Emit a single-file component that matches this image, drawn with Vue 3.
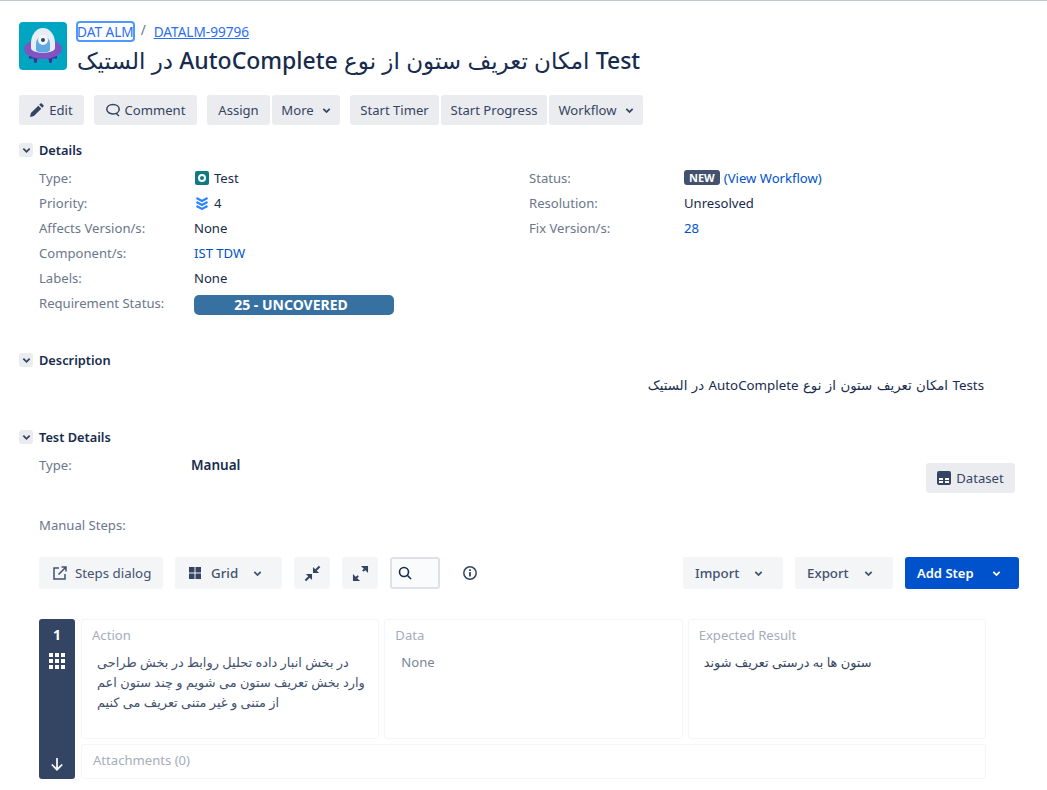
<script setup>
const leftFields = [
  { label: 'Affects Version/s:', value: 'None' },
  { label: 'Component/s:', value: 'IST TDW', link: true },
  { label: 'Labels:', value: 'None' },
]
const actionLines = [
  'در بخش انبار داده تحلیل روابط در بخش طراحی',
  'وارد بخش تعریف ستون می شویم و چند ستون اعم',
  'از متنی و غیر متنی تعریف می کنیم',
]
</script>

<template>
  <div class="page">
    <header class="issue-head">
      <svg class="avatar" viewBox="0 0 48 48">
        <rect width="48" height="48" rx="4" fill="#00a5c2" />
        <path d="M10 34h28v2.500h-4.500l-1 4.500h-2l-1-4.500H18.500l-1 4.500h-2l-1-4.500H10z" fill="#403294" />
        <ellipse cx="24" cy="27" rx="19" ry="10" fill="#8154c4" />
        <path d="M12 21a12 15 0 0 1 24 0v5a12 5 0 0 1-24 0z" fill="#e6edf5" />
        <path d="M17 22a7 8 0 0 1 14 0v6a7 2.500 0 0 1-14 0z" fill="#5fa8e0" />
        <circle cx="24" cy="18" r="5" fill="#f4f5f7" />
        <circle cx="24" cy="18" r="2" fill="#344563" />
      </svg>
      <div class="head-text">
        <div class="crumbs">
          <a class="crumb focused">DAT ALM</a>
          <span class="sep">/</span>
          <a class="crumb">DATALM-99796</a>
        </div>
        <h1 dir="rtl">Test امکان تعریف ستون از نوع AutoComplete در الستیک</h1>
      </div>
    </header>

    <div class="ops">
      <div class="group">
        <button class="btn b-edit">
          <svg class="ico" viewBox="0 0 14 14"><path d="M0 14l.9-3.900 7.400-7.400 3 3-7.400 7.400zM9.200 1.800l1.200-1.200a1 1 0 0 1 1.400 0l1.600 1.600a1 1 0 0 1 0 1.400l-1.200 1.200z" fill="#344563" /></svg>
          Edit
        </button>
      </div>
      <div class="group">
        <button class="btn b-comment">
          <svg class="ico" viewBox="0 0 14 14"><path d="M7 1.500c3.500 0 6.200 2 6.200 4.800S10.500 11 7 11C3.500 11 .8 9.100.8 6.300S3.500 1.500 7 1.500zM10 10.200l3 2.800" fill="none" stroke="#344563" stroke-width="1.500" /></svg>
          Comment
        </button>
      </div>
      <div class="group">
        <button class="btn b-assign">Assign</button>
        <button class="btn b-more">More
          <svg class="chev" viewBox="0 0 10 10"><path d="M1.500 3.200L5 6.700l3.500-3.500" fill="none" stroke="#344563" stroke-width="2" /></svg>
        </button>
      </div>
      <div class="group">
        <button class="btn b-timer">Start Timer</button>
        <button class="btn b-progress">Start Progress</button>
        <button class="btn b-workflow">Workflow
          <svg class="chev" viewBox="0 0 10 10"><path d="M1.500 3.200L5 6.700l3.500-3.500" fill="none" stroke="#344563" stroke-width="2" /></svg>
        </button>
      </div>
    </div>

    <section class="details">
      <div class="mod-head">
        <span class="toggle"><svg viewBox="0 0 10 10"><path d="M1.500 3L5 6.500 8.500 3" fill="none" stroke="#344563" stroke-width="2" /></svg></span>
        <h2>Details</h2>
      </div>
      <div class="detail-cols">
        <div class="col">
          <div class="row">
            <span class="lbl">Type:</span>
            <span class="val">
              <svg class="type-ico" viewBox="0 0 14 14"><rect width="14" height="14" rx="2" fill="#0e7a86" /><circle cx="7" cy="7" r="3" fill="none" stroke="#fff" stroke-width="2" /></svg>
              Test
            </span>
          </div>
          <div class="row">
            <span class="lbl">Priority:</span>
            <span class="val">
              <svg class="type-ico" viewBox="0 0 14 14"><path d="M1.500 2l5.500 3 5.500-3M1.500 6l5.500 3 5.500-3M1.500 10l5.500 3 5.500-3" fill="none" stroke="#2684ff" stroke-width="2" /></svg>
              4
            </span>
          </div>
          <div v-for="f in leftFields" :key="f.label" class="row">
            <span class="lbl">{{ f.label }}</span>
            <span class="val" :class="{ link: f.link }">{{ f.value }}</span>
          </div>
          <div class="row">
            <span class="lbl">Requirement Status:</span>
            <span class="req-pill">25 - UNCOVERED</span>
          </div>
        </div>
        <div class="col">
          <div class="row">
            <span class="lbl">Status:</span>
            <span class="val"><span class="lozenge">NEW</span><span class="link">(View Workflow)</span></span>
          </div>
          <div class="row">
            <span class="lbl">Resolution:</span>
            <span class="val">Unresolved</span>
          </div>
          <div class="row">
            <span class="lbl">Fix Version/s:</span>
            <span class="val link">28</span>
          </div>
        </div>
      </div>
    </section>

    <section class="description">
      <div class="mod-head">
        <span class="toggle"><svg viewBox="0 0 10 10"><path d="M1.500 3L5 6.500 8.500 3" fill="none" stroke="#344563" stroke-width="2" /></svg></span>
        <h2>Description</h2>
      </div>
      <p class="desc-text" dir="rtl">Tests امکان تعریف ستون از نوع AutoComplete در الستیک</p>
    </section>

    <section class="test-details">
      <div class="mod-head">
        <span class="toggle"><svg viewBox="0 0 10 10"><path d="M1.500 3L5 6.500 8.500 3" fill="none" stroke="#344563" stroke-width="2" /></svg></span>
        <h2>Test Details</h2>
      </div>
      <div class="type-row">
        <span class="lbl">Type:</span>
        <b class="manual">Manual</b>
        <button class="btn dataset">
          <svg class="ico" viewBox="0 0 14 14"><rect width="14" height="14" rx="2" fill="#344563" /><path d="M2 7h4v2H2zM8 7h4v2H8zM2 10h4v2H2zM8 10h4v2H8z" fill="#fff" /></svg>
          Dataset
        </button>
      </div>
      <div class="lbl steps-lbl">Manual Steps:</div>

      <div class="steps-bar">
        <button class="tbtn wide">
          <svg class="ico" viewBox="0 0 14 14"><path d="M6 2H1v11h11V8" fill="none" stroke="#42526e" stroke-width="1.500" /><path d="M5.500 8.500L12.500 1.500M8.500 1h4.500v4.500" fill="none" stroke="#42526e" stroke-width="1.500" /></svg>
          Steps dialog
        </button>
        <button class="tbtn grid">
          <svg class="ico small" viewBox="0 0 12 12"><path d="M0 0h5.500v5.500H0zM6.500 0H12v5.500H6.500zM0 6.500h5.500V12H0zM6.500 6.500H12V12H6.500z" fill="#344563" /></svg>
          Grid
          <svg class="chev right" viewBox="0 0 10 10"><path d="M1.500 3.200L5 6.700l3.500-3.500" fill="none" stroke="#42526e" stroke-width="2" /></svg>
        </button>
        <button class="tbtn square">
          <svg class="ico big" viewBox="0 0 18 18"><path d="M1.500 16.500L6.500 11.500M11.500 6.500L16.500 1.500" fill="none" stroke="#344563" stroke-width="2.200" /><path d="M2 9.500h6.500V16zM16 8.500H9.500V2z" fill="#344563" /></svg>
        </button>
        <button class="tbtn square">
          <svg class="ico big" viewBox="0 0 18 18"><path d="M6.500 11.500L2.500 15.500M11.500 6.500L15.500 2.500" fill="none" stroke="#344563" stroke-width="2.200" /><path d="M1 9.500V17h7.500zM17 8.500V1H9.500z" fill="#344563" /></svg>
        </button>
        <div class="search">
          <svg class="ico" viewBox="0 0 14 14"><circle cx="6" cy="6" r="4.500" fill="none" stroke="#172b4d" stroke-width="1.600" /><path d="M9.300 9.300l3.700 3.700" stroke="#172b4d" stroke-width="1.600" /></svg>
        </div>
        <svg class="info" viewBox="0 0 16 16"><circle cx="8" cy="8" r="6.200" fill="none" stroke="#344563" stroke-width="1.500" /><path d="M7.100 7h1.800v4.500H7.100zM7.100 4.200h1.800v1.800H7.100z" fill="#344563" /></svg>
        <div class="bar-right">
          <button class="tbtn imp">Import
            <svg class="chev right" viewBox="0 0 10 10"><path d="M1.500 3.200L5 6.700l3.500-3.500" fill="none" stroke="#42526e" stroke-width="2" /></svg>
          </button>
          <button class="tbtn exp">Export
            <svg class="chev right" viewBox="0 0 10 10"><path d="M1.500 3.200L5 6.700l3.500-3.500" fill="none" stroke="#42526e" stroke-width="2" /></svg>
          </button>
          <button class="tbtn add">Add Step
            <svg class="chev right" viewBox="0 0 10 10"><path d="M1.500 3.200L5 6.700l3.500-3.500" fill="none" stroke="#fff" stroke-width="2" /></svg>
          </button>
        </div>
      </div>

      <div class="step">
        <div class="step-side">
          <span class="num">1</span>
          <svg class="dots" viewBox="0 0 16 16"><path d="M0 0h4v4H0zM6 0h4v4H6zM12 0h4v4h-4zM0 6h4v4H0zM6 6h4v4H6zM12 6h4v4h-4zM0 12h4v4H0zM6 12h4v4H6zM12 12h4v4h-4z" fill="#fff" /></svg>
          <svg class="arrow" viewBox="0 0 14 14"><path d="M7 1v11.500M1.800 7.500L7 12.700l5.200-5.200" fill="none" stroke="#fff" stroke-width="1.700" /></svg>
        </div>
        <div class="step-body">
          <div class="cells">
            <div class="cell action">
              <div class="cell-title">Action</div>
              <div class="cell-text fa">
                <div v-for="line in actionLines" :key="line" dir="rtl" class="fa-line">{{ line }}</div>
              </div>
            </div>
            <div class="cell data">
              <div class="cell-title">Data</div>
              <div class="cell-text none">None</div>
            </div>
            <div class="cell expected">
              <div class="cell-title">Expected Result</div>
              <div class="cell-text fa"><div dir="rtl" class="fa-line dark">ستون ها به درستی تعریف شوند</div></div>
            </div>
          </div>
          <div class="attachments">Attachments (0)</div>
        </div>
      </div>
    </section>
  </div>
</template>

<style>
html, body {
  margin: 0;
  background: #fff;
}
</style>

<style scoped>
.page {
  height: 790px;
  box-sizing: border-box;
  overflow: hidden;
  border-top: 1px solid #c1c7d0;
  font-family: "Noto Sans", "DejaVu Sans", sans-serif;
  font-size: 13.1px;
  color: #172b4d;
}
button {
  font-family: inherit;
  border: none;
  padding: 0;
  cursor: pointer;
}
.issue-head {
  display: flex;
  gap: 10px;
  padding: 21px 0 0 19px;
}
.avatar {
  width: 48px;
  height: 48px;
  flex: none;
}
.head-text {
  margin-top: -1px;
}
.crumbs {
  display: flex;
  align-items: center;
  font-size: 13.6px;
  height: 20px;
  gap: 5px;
}
.crumb {
  color: #2a6ef5;
  text-decoration: underline;
}
.crumb.focused {
  text-decoration: none;
  outline: 2px solid #4c9aff;
  outline-offset: -1px;
  border-radius: 3px;
}
.sep {
  color: #6b778c;
  margin: -3px 3px 0 2px;
}
h1 {
  display: inline-block;
  margin: 3px 0 0;
  font-size: 23px;
  word-spacing: 0.3px;
  line-height: 32px;
  font-weight: 500;
  color: #172b4d;
}
.ops {
  display: flex;
  gap: 10px;
  padding: 19px 0 0 19px;
}
.group {
  display: flex;
  gap: 2px;
}
.btn {
  display: flex;
  align-items: center;
  justify-content: center;
  gap: 5px;
  height: 30px;
  background: #ebecf0;
  color: #344563;
  font-size: 13.1px;
  border-radius: 3px;
}
.b-edit { width: 65px; }
.b-comment { width: 103px; }
.b-assign { width: 63px; }
.b-more { width: 68px; }
.b-timer { width: 89px; }
.b-progress { width: 106px; }
.b-workflow { width: 94px; }
.ico {
  width: 14px;
  height: 14px;
  flex: none;
}
.ico.small {
  width: 12px;
  height: 12px;
}
.ico.big {
  width: 17px;
  height: 17px;
}
.chev {
  width: 9px;
  height: 9px;
  margin-left: 3px;
}
.details {
  padding-top: 18px;
}
.mod-head {
  display: flex;
  align-items: center;
  gap: 6px;
  padding-left: 19px;
  height: 14px;
}
.toggle {
  display: flex;
  align-items: center;
  justify-content: center;
  width: 14px;
  height: 14px;
  background: #ebecf0;
  border-radius: 3px;
}
.toggle svg {
  width: 9px;
  height: 9px;
}
h2 {
  margin: 0;
  font-size: 12.8px;
  font-weight: 600;
  color: #172b4d;
}
.detail-cols {
  display: grid;
  grid-template-columns: 490px 1fr;
  padding: 8px 0 0 39px;
}
.row {
  display: grid;
  grid-template-columns: 155px 1fr;
  height: 25px;
  align-items: center;
}
.lbl {
  color: #6b778c;
}
.val {
  display: flex;
  align-items: center;
  gap: 5px;
  color: #172b4d;
}
.link {
  color: #0052cc;
}
.type-ico {
  width: 14px;
  height: 14px;
  margin-left: 1px;
}
.lozenge {
  background: #42526e;
  color: #fff;
  font-size: 11px;
  font-weight: 700;
  line-height: 15px;
  padding: 0 5px;
  border-radius: 3px;
  margin-right: -1px;
}
.req-pill {
  width: 200px;
  height: 20px;
  line-height: 20px;
  margin-top: 4px;
  padding-right: 6px;
  box-sizing: border-box;
  text-align: center;
  background: #3671a2;
  color: #fff;
  font-weight: 700;
  font-size: 14px;
  border-radius: 5px;
}
.description {
  padding-top: 38px;
}
.desc-text {
  margin: 8px 63px 0 0;
  line-height: 20px;
  font-size: 13.3px;
  word-spacing: 1px;
}
.test-details {
  padding-top: 35px;
}
.type-row {
  display: flex;
  align-items: flex-start;
  padding: 11px 32px 0 39px;
  height: 46px;
  box-sizing: border-box;
  line-height: 20px;
}
.type-row .lbl {
  width: 152px;
}
.manual {
  font-weight: 600;
  font-size: 13.5px;
}
.dataset {
  margin-left: auto;
  margin-top: 8px;
  width: 89px;
  box-sizing: border-box;
}
.steps-lbl {
  padding: 25px 0 0 39px;
  line-height: 20px;
}
.steps-bar {
  display: flex;
  align-items: center;
  gap: 12px;
  margin: 22px 28px 0 39px;
}
.tbtn {
  display: flex;
  align-items: center;
  height: 32px;
  padding: 0 14px 0 12px;
  box-sizing: border-box;
  background: #f4f5f7;
  color: #42526e;
  font-size: 13.3px;
  font-weight: 500;
  white-space: nowrap;
  border-radius: 3px;
}
.tbtn.wide {
  width: 124px;
  padding-left: 14px;
  gap: 8px;
  font-weight: 400;
}
.tbtn.grid {
  width: 107px;
  padding-left: 14px;
  gap: 10px;
}
.chev.right {
  margin-left: auto;
  margin-right: 6px;
}
.tbtn.square {
  width: 36px;
  justify-content: center;
  padding: 0;
}
.search {
  display: flex;
  align-items: center;
  width: 50px;
  height: 32px;
  box-sizing: border-box;
  padding-left: 6px;
  background: #fafbfc;
  border: 2px solid #dfe1e6;
  border-radius: 3px;
}
.info {
  width: 16px;
  height: 16px;
  margin-left: 10px;
}
.bar-right {
  display: flex;
  gap: 12px;
  margin-left: auto;
}
.imp {
  width: 100px;
}
.exp {
  width: 98px;
}
.add {
  width: 114px;
  padding: 0 12px;
  background: #0052cc;
  color: #fff;
  font-weight: 600;
  font-size: 13px;
}
.step {
  display: flex;
  gap: 6px;
  margin: 30px 61px 0 39px;
}
.step-side {
  display: flex;
  flex-direction: column;
  align-items: center;
  width: 36px;
  height: 160px;
  flex: none;
  box-sizing: border-box;
  padding: 7px 0 8px;
  background: #344563;
  border-radius: 3px;
  color: #fff;
}
.num {
  font-weight: 700;
  font-size: 14px;
  line-height: 18px;
}
.dots {
  width: 16px;
  height: 16px;
  margin-top: 9px;
}
.arrow {
  width: 14px;
  height: 14px;
  margin-top: auto;
}
.step-body {
  flex: 1;
  display: flex;
  flex-direction: column;
  gap: 5px;
}
.cells {
  display: flex;
  gap: 5px;
}
.cell {
  flex: 1;
  height: 120px;
  box-sizing: border-box;
  border: 1px solid #f4f5f7;
  border-radius: 3px;
  padding: 6px 10px;
}
.cell-title {
  color: #a5adba;
  line-height: 18px;
}
.cell-text {
  margin-top: 8px;
  padding-left: 5px;
  line-height: 20px;
}
.fa {
  color: #42526e;
  font-size: 12.9px;
}
.fa-line {
  text-align: left;
  white-space: nowrap;
}
.fa-line.dark {
  color: #344563;
}
.none {
  color: #7a869a;
  padding-left: 6px;
}
.attachments {
  height: 35px;
  box-sizing: border-box;
  border: 1px solid #f4f5f7;
  border-radius: 3px;
  padding-left: 11px;
  line-height: 31px;
  color: #a5adba;
}
</style>
